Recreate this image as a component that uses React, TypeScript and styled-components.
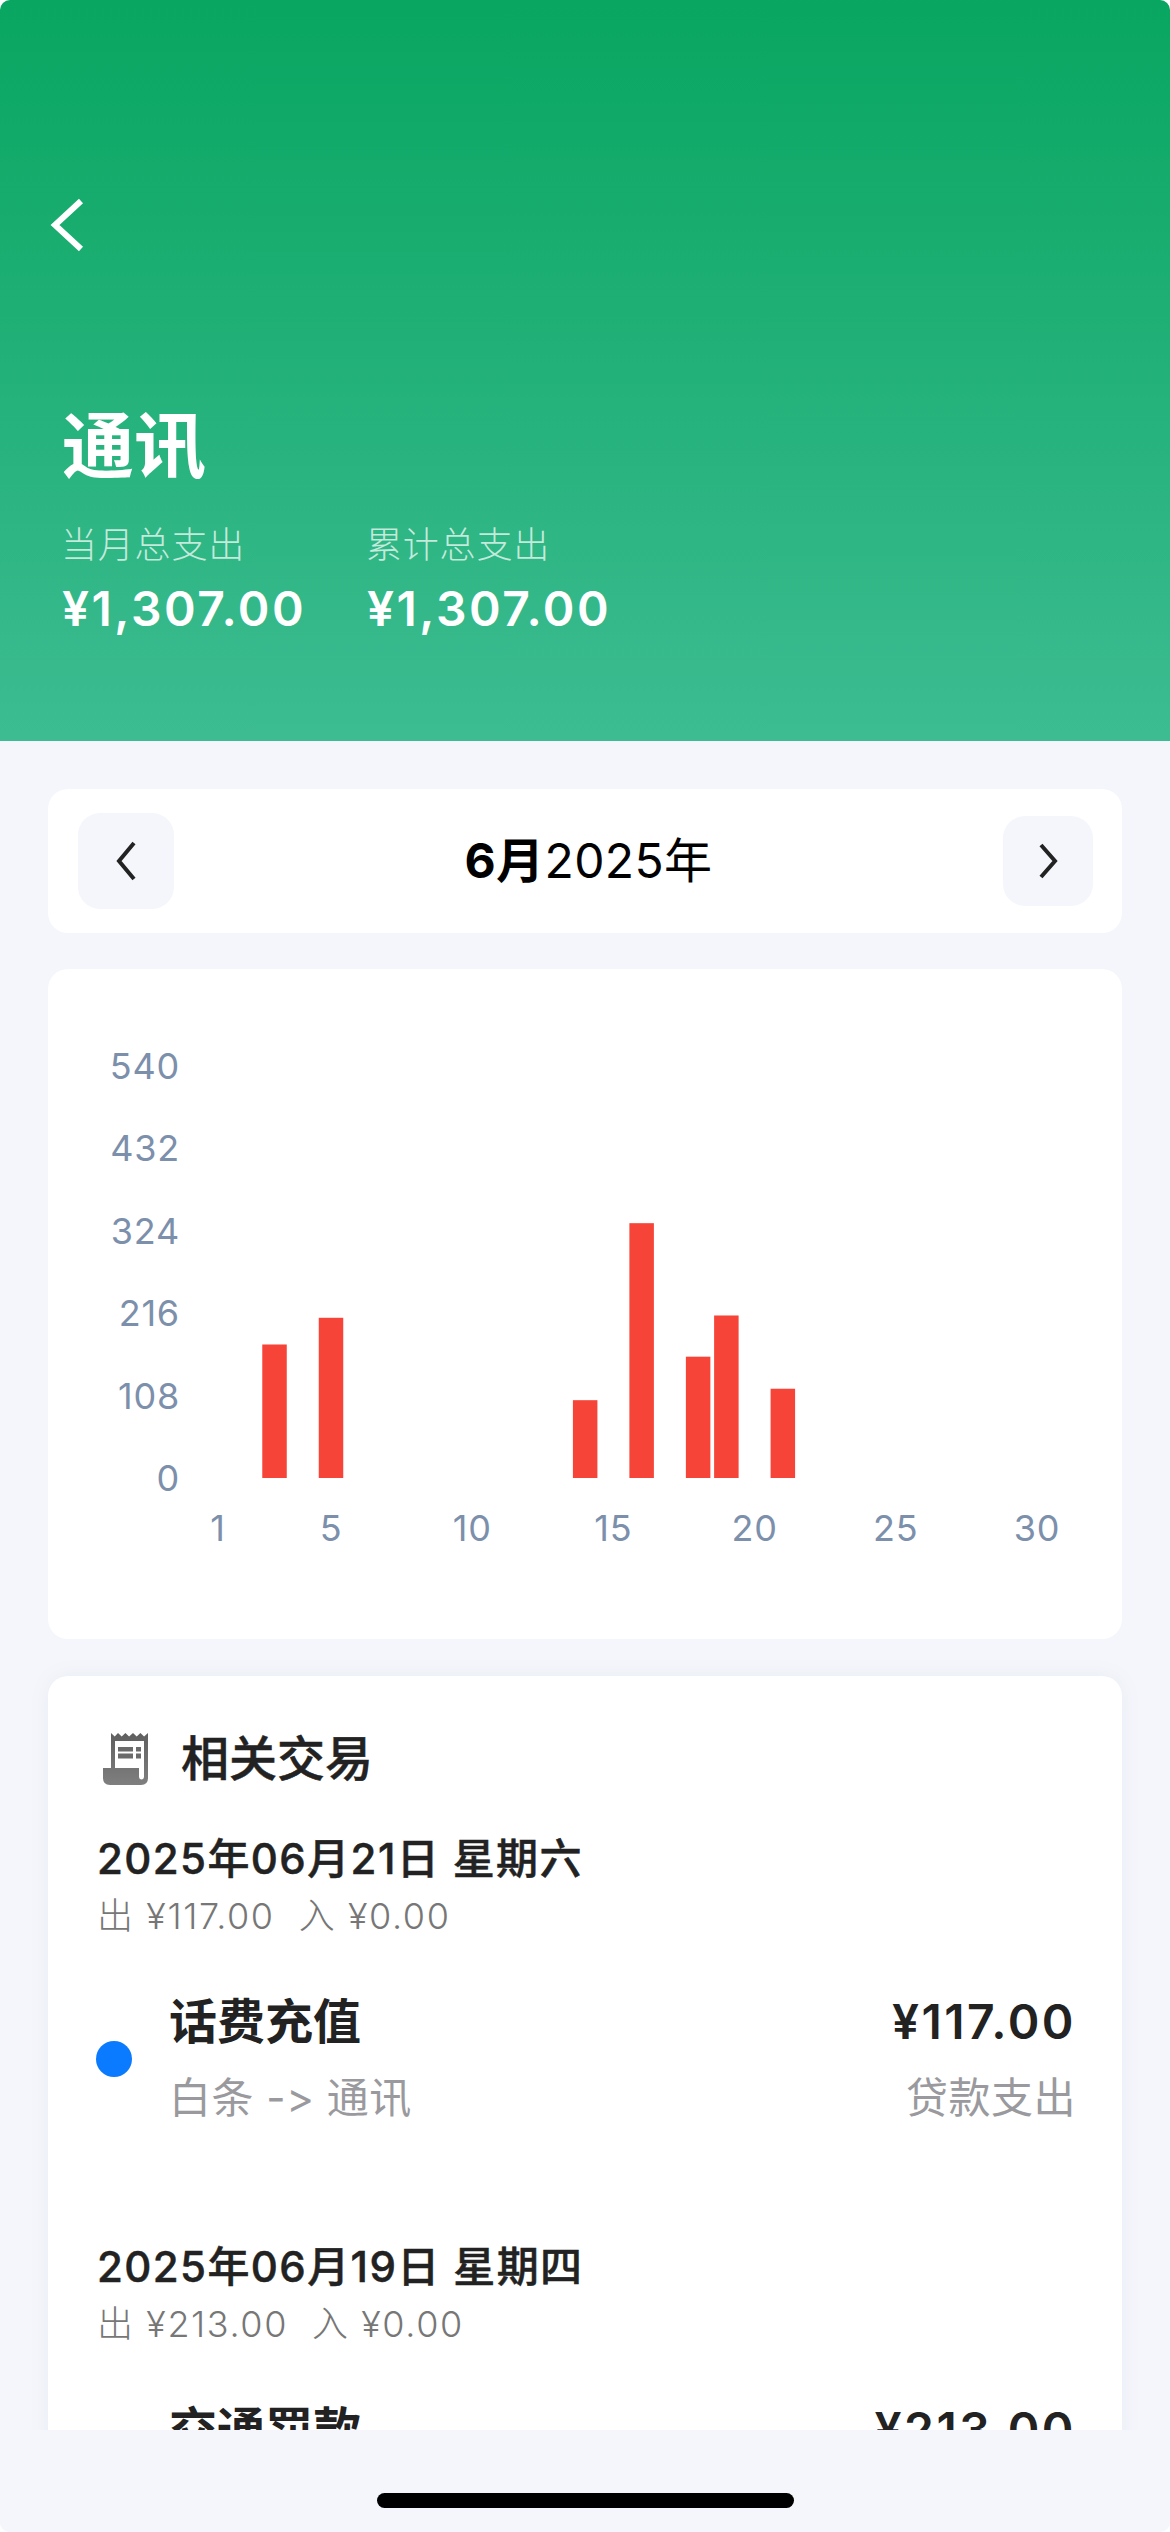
import * as React from 'react';
import styled, { createGlobalStyle } from 'styled-components';

const FONT = `Inter, "Noto Sans CJK SC", sans-serif`;

const GlobalStyle = createGlobalStyle`
  html, body {
    margin: 0;
    padding: 0;
    background: #fff;
  }
  body {
    font-family: ${FONT};
    font-feature-settings: "calt" 0;
  }
`;

interface IBar {
  day: number;
  amount: number;
}

interface ITransaction {
  name: string;
  route: string;
  amount: string;
  kind: string;
}

interface IDayGroup {
  date: string;
  out: string;
  in: string;
  transactions: ITransaction[];
}

const BARS: IBar[] = [
  { day: 3, amount: 175 },
  { day: 5, amount: 210 },
  { day: 14, amount: 102 },
  { day: 16, amount: 334 },
  { day: 18, amount: 159 },
  { day: 19, amount: 213 },
  { day: 21, amount: 117 },
];

const Y_TICKS = [0, 108, 216, 324, 432, 540];
const X_TICKS = [1, 5, 10, 15, 20, 25, 30];

const DAYS: IDayGroup[] = [
  {
    date: '2025年06月21日 星期六',
    out: '¥117.00',
    in: '¥0.00',
    transactions: [{ name: '话费充值', route: '白条 -> 通讯', amount: '¥117.00', kind: '贷款支出' }],
  },
  {
    date: '2025年06月19日 星期四',
    out: '¥213.00',
    in: '¥0.00',
    transactions: [{ name: '交通罚款', route: '白条 -> 通讯', amount: '¥213.00', kind: '贷款支出' }],
  },
];

const Screen = styled.div`
  width: 1170px;
  height: 2532px;
  display: flex;
  flex-direction: column;
  overflow: hidden;
  border-radius: 10px;
  background: #f4f6fb;
`;

const Header = styled.header`
  flex: 0 0 741px;
  box-sizing: border-box;
  padding: 198px 0 0 62px;
  color: #fff;
  background: linear-gradient(180deg, #08a660 0%, #3dbc92 100%);
`;

const BackButton = styled.div`
  width: 40px;
  height: 54px;
  margin-left: -14px;
`;

const Title = styled.h1`
  margin: 158px 0 0;
  font-size: 72px;
  line-height: 72px;
  font-weight: 700;
`;

const Stats = styled.div`
  display: flex;
  margin-top: 41px;
`;

const Stat = styled.div`
  width: 305px;
`;

const StatLabel = styled.div`
  margin-left: -1px;
  font-size: 36px;
  line-height: 44px;
  font-weight: 300;
  letter-spacing: 0.8px;
  color: rgba(255, 255, 255, 0.72);
`;

const StatValue = styled.div`
  margin-top: 14px;
  font-size: 48px;
  line-height: 56px;
  font-weight: 600;
  letter-spacing: 2.5px;
`;

const Content = styled.main`
  flex: 1;
  min-height: 0;
  overflow: hidden;
  display: flex;
  flex-direction: column;
  gap: 36px;
  padding: 48px 48px 0;
`;

const MonthCard = styled.section`
  flex: 0 0 144px;
  display: flex;
  align-items: center;
  justify-content: space-between;
  padding: 0 29px 0 30px;
  border-radius: 20px;
  background: #fff;
`;

const MonthButton = styled.div<{ $size: number }>`
  width: ${(props) => props.$size}px;
  height: ${(props) => props.$size}px;
  display: flex;
  align-items: center;
  justify-content: center;
  border-radius: 22px;
  background: #f4f6fb;
`;

const MonthLabel = styled.div`
  font-size: 48px;
  line-height: 56px;
  font-weight: 400;
  color: #000;
  letter-spacing: 0.4px;

  strong {
    font-weight: 700;
  }
`;

const ChartCard = styled.section`
  flex: 0 0 670px;
  border-radius: 20px;
  background: #fff;

  svg {
    display: block;
  }

  text {
    font-family: ${FONT};
    font-size: 36px;
    letter-spacing: 0.8px;
    fill: #7c8fab;
  }
`;

const TransactionsCard = styled.section`
  flex: 0 0 auto;
  padding: 58px 48px 60px 49px;
  margin-top: 1px;
  border-radius: 20px 20px 0 0;
  background: #fff;
  box-shadow: 0 0 20px rgba(120, 130, 170, 0.08);
`;

const CardHeading = styled.div`
  display: flex;
  align-items: center;
  height: 50px;
  padding-left: 6px;
  gap: 32px;
`;

const HeadingText = styled.h2`
  margin: 0;
  font-size: 48px;
  line-height: 50px;
  font-weight: 500;
  color: #222;
  -webkit-text-stroke: 0.5px #222;
`;

const DayGroup = styled.div`
  margin-top: 50px;

  & + & {
    margin-top: 119px;
  }
`;

const DayTitle = styled.div`
  font-size: 42px;
  line-height: 50px;
  font-weight: 500;
  color: #222;
  letter-spacing: 1.4px;
  -webkit-text-stroke: 0.5px #222;
`;

const DaySummary = styled.div`
  display: flex;
  gap: 24px;
  margin-top: 10px;
  font-size: 36px;
  line-height: 44px;
  font-weight: 300;
  color: #777;
  letter-spacing: 1.6px;
`;

const TransactionRow = styled.div`
  display: flex;
  align-items: center;
  margin: 56px 0 0 -1px;
`;

const Dot = styled.span`
  flex: 0 0 36px;
  height: 36px;
  margin-right: 37px;
  border-radius: 50%;
  background: #0a7aff;
`;

const TransactionMain = styled.div`
  flex: 1;
  min-width: 0;
`;

const TransactionSide = styled.div`
  margin-right: -2px;
  text-align: right;
`;

const TransactionName = styled.div`
  font-size: 48px;
  line-height: 56px;
  font-weight: 600;
  color: #222;
`;

const TransactionAmount = styled(TransactionName)`
  letter-spacing: 2.5px;
`;

const SecondaryText = styled.div`
  margin-top: 23px;
  font-size: 42px;
  line-height: 50px;
  font-weight: 400;
  letter-spacing: 0.5px;
  color: #9a9a9e;
`;

const HomeBar = styled.div`
  flex: 0 0 102px;
  display: flex;
  justify-content: center;
  padding-top: 63px;
  box-sizing: border-box;
  background: #f4f6fb;
`;

const HomeIndicator = styled.div`
  width: 417px;
  height: 15px;
  border-radius: 8px;
  background: #000;
`;

function Chart() {
  // the chart's own grid: 0 sits on y=509, each 108 is 82.4px, each day 28.24px
  const baseY = 509;
  const yFor = (value: number) => (value / 108) * 82.4;
  const xFor = (day: number) => 141.8 + day * 28.24;

  return (
    <svg width={1074} height={670} viewBox="0 0 1074 670">
      {Y_TICKS.map((tick) => (
        <text key={tick} x={132} y={baseY - yFor(tick) + 13} textAnchor="end">
          {tick}
        </text>
      ))}
      {BARS.map((bar) => (
        <rect
          key={bar.day}
          x={xFor(bar.day) - 12.25}
          y={baseY - yFor(bar.amount)}
          width={24.5}
          height={yFor(bar.amount)}
          fill="#f64538"
        />
      ))}
      {X_TICKS.map((tick) => (
        <text key={tick} x={xFor(tick)} y={572} textAnchor="middle">
          {tick}
        </text>
      ))}
    </svg>
  );
}

function ReceiptIcon() {
  return (
    <svg width={46} height={52} viewBox="0 0 46 52">
      <defs>
        <linearGradient id="receipt" x1="0" y1="0" x2="0" y2="1">
          <stop offset="0" stopColor="#5f5f5f" />
          <stop offset="1" stopColor="#7f7f7f" />
        </linearGradient>
      </defs>
      <path
        d="M8 0l3.7 3.5L15 0l3.7 3.5L22.4 0l3.7 3.5L30 0l3.7 3.5L37.4 0l3.7 3.5L45 0v45q0 7-7 7H7q-7 0-7-7V35h8z"
        fill="url(#receipt)"
      />
      <path d="M12 8h29v36a2.5 2.5 0 0 1-5 0v-9H12z" fill="#fff" />
      <path d="M15 14h15v4.500H15zM33 14h5v4.500h-5zM15 20.500h15v5H15zM33 20.500h5v5h-5z" fill="#6b6b6b" />
    </svg>
  );
}

export default function App() {
  return (
    <Screen>
      <GlobalStyle />
      <Header>
        <BackButton>
          <svg width={40} height={54} viewBox="0 0 40 54">
            <polyline points="33,3 7,27 33,51" fill="none" stroke="#fff" strokeWidth={6} />
          </svg>
        </BackButton>
        <Title>通讯</Title>
        <Stats>
          <Stat>
            <StatLabel>当月总支出</StatLabel>
            <StatValue>¥1,307.00</StatValue>
          </Stat>
          <Stat>
            <StatLabel>累计总支出</StatLabel>
            <StatValue>¥1,307.00</StatValue>
          </Stat>
        </Stats>
      </Header>
      <Content>
        <MonthCard>
          <MonthButton $size={96}>
            <svg width={24} height={40} viewBox="0 0 24 40">
              <polyline points="20,2 5,20 20,38" fill="none" stroke="#222" strokeWidth={4} />
            </svg>
          </MonthButton>
          <MonthLabel>
            <strong>6月</strong>2025年
          </MonthLabel>
          <MonthButton $size={90}>
            <svg width={24} height={36} viewBox="0 0 24 36">
              <polyline points="5,2 19,18 5,34" fill="none" stroke="#222" strokeWidth={4} />
            </svg>
          </MonthButton>
        </MonthCard>
        <ChartCard>
          <Chart />
        </ChartCard>
        <TransactionsCard>
          <CardHeading>
            <ReceiptIcon />
            <HeadingText>相关交易</HeadingText>
          </CardHeading>
          {DAYS.map((day) => (
            <DayGroup key={day.date}>
              <DayTitle>{day.date}</DayTitle>
              <DaySummary>
                <span>出 {day.out}</span>
                <span>入 {day.in}</span>
              </DaySummary>
              {day.transactions.map((item) => (
                <TransactionRow key={item.name}>
                  <Dot />
                  <TransactionMain>
                    <TransactionName>{item.name}</TransactionName>
                    <SecondaryText>{item.route}</SecondaryText>
                  </TransactionMain>
                  <TransactionSide>
                    <TransactionAmount>{item.amount}</TransactionAmount>
                    <SecondaryText>{item.kind}</SecondaryText>
                  </TransactionSide>
                </TransactionRow>
              ))}
            </DayGroup>
          ))}
        </TransactionsCard>
      </Content>
      <HomeBar>
        <HomeIndicator />
      </HomeBar>
    </Screen>
  );
}
